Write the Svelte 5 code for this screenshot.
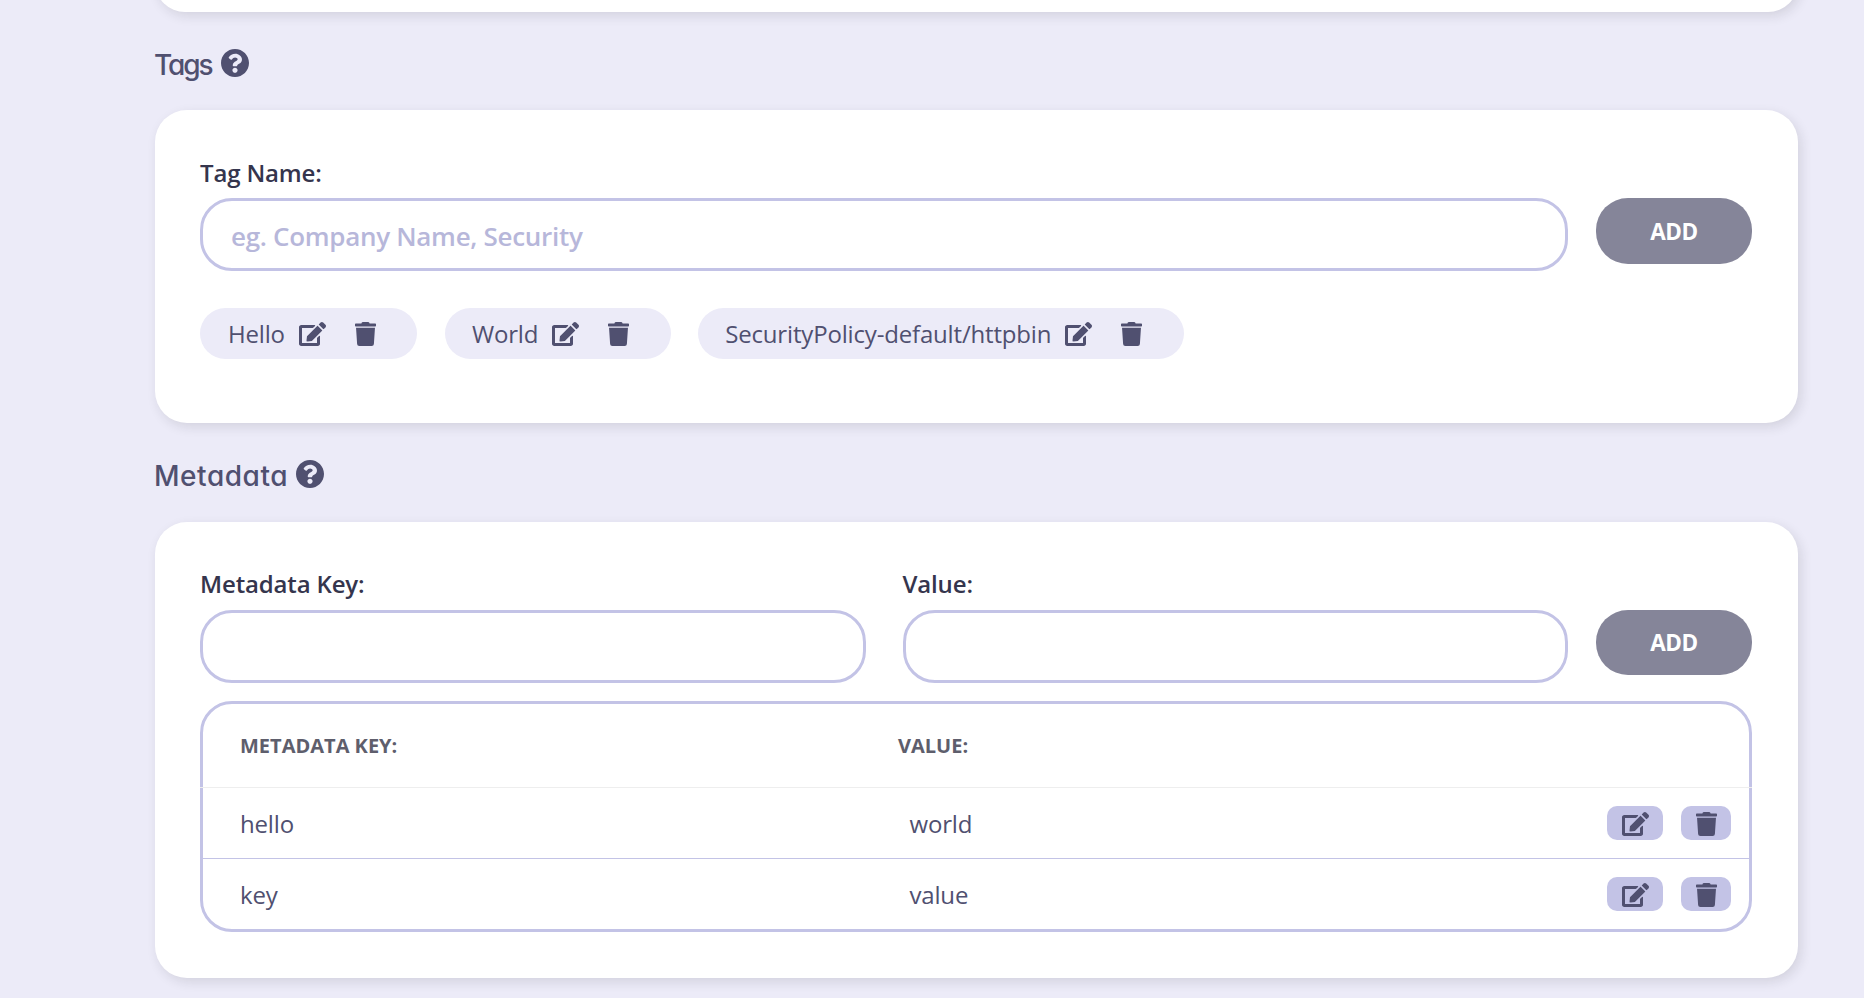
<script>
  const tags = ['Hello', 'World', 'SecurityPolicy-default/httpbin'];
  const rows = [
    { key: 'hello', value: 'world' },
    { key: 'key', value: 'value' }
  ];
</script>

{#snippet help()}
  <svg class="help" viewBox="8 8 496 496" aria-hidden="true">
    <path d="M504 256c0 136.997-111.043 248-248 248S8 392.997 8 256C8 119.083 119.043 8 256 8s248 111.083 248 248zM262.655 90c-54.497 0-89.255 22.957-116.549 63.758-3.536 5.286-2.353 12.415 2.715 16.258l34.699 26.31c5.205 3.947 12.621 3.008 16.665-2.122 17.864-22.658 30.113-35.797 57.303-35.797 20.429 0 45.698 13.148 45.698 32.958 0 14.976-12.363 22.667-32.534 33.976C247.128 238.528 216 254.941 216 296v4c0 6.627 5.373 12 12 12h56c6.627 0 12-5.373 12-12v-1.333c0-28.462 83.186-29.647 83.186-106.667 0-58.002-60.165-102-116.531-102zM256 338c-25.365 0-46 20.635-46 46 0 25.364 20.635 46 46 46s46-20.636 46-46c0-25.365-20.635-46-46-46z" />
  </svg>
{/snippet}

{#snippet edit()}
  <svg class="edit" viewBox="0 0 576 512" aria-hidden="true">
    <path d="M402.6 83.2l90.2 90.2c3.8 3.8 3.8 10 0 13.8L274.4 405.6l-92.8 10.3c-12.4 1.4-22.9-9.1-21.5-21.5l10.3-92.8L388.8 83.2c3.8-3.8 10-3.8 13.8 0zm162-22.9l-48.8-48.8c-15.2-15.2-39.9-15.2-55.2 0l-35.4 35.4c-3.8 3.8-3.8 10 0 13.8l90.2 90.2c3.8 3.8 10 3.8 13.8 0l35.4-35.4c15.2-15.3 15.2-40 0-55.2zM384 346.2V448H64V128h229.8c3.2 0 6.2-1.3 8.5-3.5l40-40c7.6-7.6 2.2-20.5-8.5-20.5H48C21.5 64 0 85.5 0 112v352c0 26.5 21.5 48 48 48h352c26.5 0 48-21.5 48-48V306.2c0-10.7-12.9-16-20.5-8.5l-40 40c-2.2 2.3-3.5 5.3-3.5 8.5z" />
  </svg>
{/snippet}

{#snippet trash()}
  <svg class="trash" viewBox="0 0 448 512" aria-hidden="true">
    <path d="M432 32H312l-9.4-18.7A24 24 0 0 0 281.1 0H166.8a23.72 23.72 0 0 0-21.4 13.3L136 32H16A16 16 0 0 0 0 48v32a16 16 0 0 0 16 16h416a16 16 0 0 0 16-16V48a16 16 0 0 0-16-16zM22 122L45 467a48 48 0 0 0 48 45h262a48 48 0 0 0 48-45L426 122z" />
  </svg>
{/snippet}

<main>
  <section class="card previous"></section>

  <h2><span>Tags</span> {@render help()}</h2>
  <section class="card tags-card">
    <div class="form">
      <label class="field">
        <span>Tag Name:</span>
        <input placeholder="eg. Company Name, Security" />
      </label>
      <button class="add">ADD</button>
    </div>
    <div class="tags">
      {#each tags as tag}
        <div class="tag">
          <span>{tag}</span>
          {@render edit()}
          {@render trash()}
        </div>
      {/each}
    </div>
  </section>

  <h2 class="second"><span>Metadata</span> {@render help()}</h2>
  <section class="card meta-card">
    <div class="form">
      <label class="field">
        <span>Metadata Key:</span>
        <input />
      </label>
      <label class="field value">
        <span>Value:</span>
        <input />
      </label>
      <button class="add short">ADD</button>
    </div>
    <div class="table">
      <div class="head">
        <span class="k">METADATA KEY:</span>
        <span>VALUE:</span>
      </div>
      {#each rows as row}
        <div class="row">
          <span class="k">{row.key}</span>
          <span class="v">{row.value}</span>
          <button class="icon wide" aria-label="Edit">{@render edit()}</button>
          <button class="icon" aria-label="Delete">{@render trash()}</button>
        </div>
      {/each}
    </div>
  </section>
</main>

<style>
  :global(body) {
    background: #ecebf8;
    overflow: hidden;
  }
  main, main * {
    box-sizing: border-box;
  }
  main {
    height: 998px;
    padding: 0 66px 0 155px;
    overflow: hidden;
    font-family: 'Open Sans', sans-serif;
    color: #505070;
  }
  svg {
    display: block;
    flex: none;
    fill: #505070;
  }
  .card {
    background: #fff;
    border-radius: 32px;
    box-shadow: 3px 4px 12px rgba(30, 30, 40, 0.12);
    padding: 45px 46px 0 45px;
  }
  .previous {
    height: 60px;
    margin-top: -48px;
  }
  .tags-card {
    height: 313px;
  }
  .meta-card {
    height: 456px;
  }
  h2 {
    display: flex;
    align-items: center;
    height: 98px;
    margin: 0;
    padding-top: 7px;
    font: 500 28px/36px Inter, sans-serif;
    font-feature-settings: 'cv11';
  }
  h2 span {
    width: 67px;
    margin-left: -1px;
    letter-spacing: -2.1px;
  }
  h2.second {
    height: 99px;
    padding-top: 6px;
  }
  h2.second span {
    width: 142px;
    letter-spacing: 0.55px;
  }
  .help {
    width: 28px;
    height: 28px;
    margin-top: -4px;
  }
  .form {
    display: flex;
    align-items: flex-start;
  }
  .field {
    flex: 1;
    display: flex;
    flex-direction: column;
  }
  .field.value {
    margin-left: 37px;
  }
  .field span {
    height: 43px;
    font-size: 24px;
    line-height: 36px;
    font-weight: 600;
    letter-spacing: -0.15px;
    color: #35354d;
  }
  .meta-card .field span {
    line-height: 34px;
  }
  input {
    width: 100%;
    height: 73px;
    padding: 2px 28px 0;
    border: 3px solid #c3c3e6;
    border-radius: 32px;
    background: #fff;
    font: 600 26px 'Open Sans', sans-serif;
    letter-spacing: -0.3px;
    outline: none;
  }
  input::placeholder {
    color: #b7b7da;
    opacity: 1;
  }
  button {
    border: 0;
    padding: 0;
  }
  .add {
    width: 156px;
    height: 66px;
    margin: 43px 0 0 28px;
    border-radius: 32px;
    background: #858599;
    color: #fff;
    font: 700 22.5px 'Open Sans', sans-serif;
    letter-spacing: -0.4px;
  }
  .add.short {
    height: 65px;
    padding-bottom: 1px;
  }
  .tags {
    display: flex;
    gap: 28px;
    margin-top: 37px;
  }
  .tag {
    display: flex;
    align-items: center;
    height: 51px;
    padding: 0 41px 0 28px;
    border-radius: 26px;
    background: #ecebf8;
    font-size: 24px;
    letter-spacing: -0.17px;
  }
  .tag + .tag {
    padding: 0 42px 0 27px;
  }
  .tag:last-child {
    margin-left: -1px;
  }
  .edit {
    width: 27px;
    height: 24px;
  }
  .trash {
    width: 21px;
    height: 24px;
  }
  .tag .edit {
    margin: 0 29px 0 14px;
  }
  .table {
    height: 231px;
    margin-top: 18px;
    border: 3px solid #c3c3e6;
    border-radius: 32px;
  }
  .head {
    display: flex;
    align-items: center;
    height: 84px;
    margin: 0 -3px;
    padding: 0 0 0 40px;
    border-bottom: 1px solid #eee;
    font-size: 20px;
    font-weight: 700;
    color: #5e5e6c;
  }
  .head .k {
    width: 658px;
  }
  .row {
    display: flex;
    align-items: center;
    height: 71px;
    padding: 0 18px 0 37px;
    border-bottom: 1px solid #c3c3e6;
    font-size: 24px;
    letter-spacing: -0.17px;
  }
  .row:last-child {
    height: 70px;
    border-bottom: 0;
  }
  .row .k {
    width: 669.5px;
  }
  .row .v {
    flex: 1;
  }
  .icon {
    display: flex;
    justify-content: center;
    align-items: center;
    width: 50px;
    height: 34px;
    padding-top: 2px;
    border-radius: 10px;
    background: #c3c3e6;
  }
  .icon.wide {
    width: 56px;
    margin-right: 18px;
  }
</style>
